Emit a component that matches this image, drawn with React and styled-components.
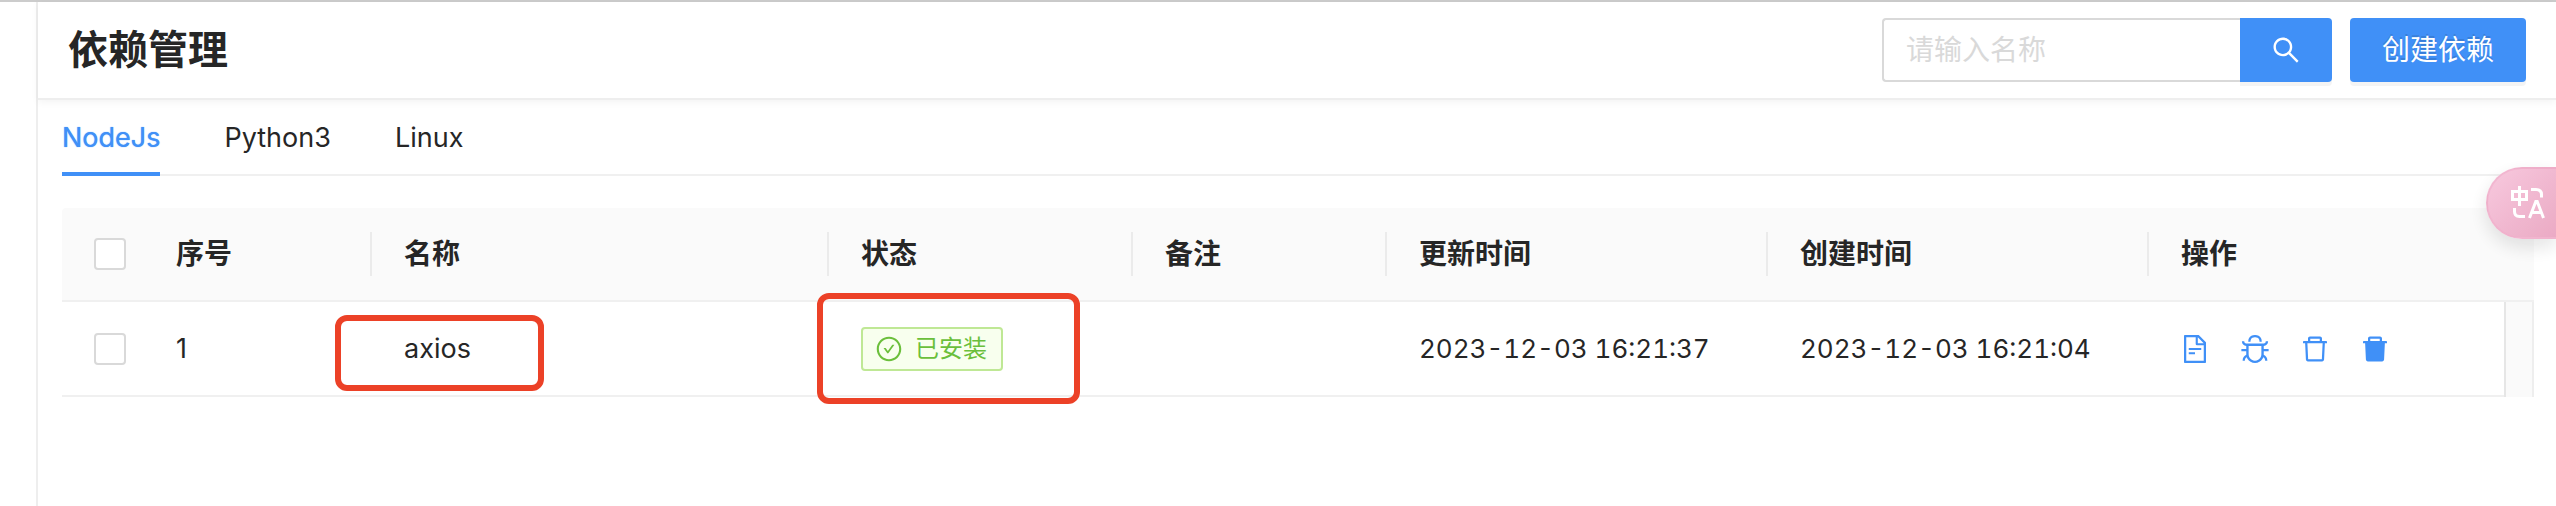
import React, { useState } from 'react';
import styled, { createGlobalStyle } from 'styled-components'
import {
  AiOutlineSearch,
  AiOutlineCheckCircle,
  AiOutlineFileText,
  AiOutlineBug,
  AiOutlineDelete,
  AiFillDelete,
} from 'react-icons/ai'

const tabs = ['NodeJs', 'Python3', 'Linux']

const columns = [
  { title: '序号', width: 228, split: true },
  { title: '名称', split: true },
  { title: '状态', width: 304, split: true },
  { title: '备注', width: 254, split: true },
  { title: '更新时间', width: 381, split: true },
  { title: '创建时间', width: 381, split: true },
  { title: '操作', width: 355 },
]

const dependencies = [
  {
    id: 1,
    name: 'axios',
    status: '已安装',
    remark: '',
    updatedAt: '2023-12-03 16:21:37',
    createdAt: '2023-12-03 16:21:04',
  },
]

function App() {

  const [search, setSearch] = useState('')
  const [activeTab, setActiveTab] = useState('NodeJs')
  const [selected, setSelected] = useState([])

  const toggle = (id) => {
    setSelected(selected.includes(id) ? selected.filter(s => s !== id) : selected.concat([id]))
  }

  const toggleAll = () => {
    setSelected(selected.length === dependencies.length ? [] : dependencies.map(d => d.id))
  }

  return (
    <Page>
      <GlobalStyle />
      <Main>
        <Header>
          <Title>依赖管理</Title>
          <Actions>
            <SearchBox onSubmit={e => e.preventDefault()}>
              <SearchInput
                aria-label="请输入名称"
                placeholder="请输入名称"
                value={search}
                onChange={e => setSearch(e.target.value)}
              />
              <SearchButton type="submit" aria-label="搜索"><AiOutlineSearch /></SearchButton>
            </SearchBox>
            <PrimaryButton type="button">创建依赖</PrimaryButton>
          </Actions>
        </Header>

        <Content>
          <Tabs role="tablist">
            {tabs.map(tab => (
              <Tab
                type="button"
                role="tab"
                key={tab}
                aria-selected={tab === activeTab}
                $active={tab === activeTab}
                onClick={() => setActiveTab(tab)}
              >
                {tab}
              </Tab>
            ))}
          </Tabs>

          <Table>
            <colgroup>
              <Col $width={82} />
              {columns.map(column => <Col $width={column.width} key={column.title} />)}
              <Col $width={30} />
            </colgroup>
            <thead>
              <tr>
                <HeadCell>
                  <Checkbox
                    type="checkbox"
                    aria-label="全选"
                    checked={selected.length === dependencies.length}
                    onChange={toggleAll}
                  />
                </HeadCell>
                {columns.map(column => (
                  <HeadCell key={column.title}>
                    <HeadLabel $split={column.split}>{column.title}</HeadLabel>
                  </HeadCell>
                ))}
                <HeadCell />
              </tr>
            </thead>
            <tbody>
              {dependencies.map(item => (
                <tr key={item.id}>
                  <Cell>
                    <Checkbox
                      type="checkbox"
                      aria-label={'选择 ' + item.name}
                      checked={selected.includes(item.id)}
                      onChange={() => toggle(item.id)}
                    />
                  </Cell>
                  <Cell>{item.id}</Cell>
                  <Cell>
                    {item.name}
                    <NameMark />
                  </Cell>
                  <Cell>
                    <Tag><AiOutlineCheckCircle />{item.status}</Tag>
                    <StatusMark />
                  </Cell>
                  <Cell>{item.remark}</Cell>
                  <TimeCell>{item.updatedAt}</TimeCell>
                  <TimeCell>{item.createdAt}</TimeCell>
                  <Cell>
                    <RowActions>
                      <IconLink href="#log" aria-label="日志"><AiOutlineFileText /></IconLink>
                      <IconLink href="#reinstall" aria-label="重新安装"><AiOutlineBug /></IconLink>
                      <IconLink href="#delete" aria-label="删除"><AiOutlineDelete /></IconLink>
                      <IconLink href="#force-delete" aria-label="强制删除"><AiFillDelete /></IconLink>
                    </RowActions>
                  </Cell>
                  <ScrollCell />
                </tr>
              ))}
            </tbody>
          </Table>
        </Content>
      </Main>

      <TranslateButton type="button" aria-label="翻译">
        <svg width="35" height="34" viewBox="0 0 35 34" fill="none" stroke="#fff" strokeWidth="3">
          <path d="M1.5 5.5h14v8h-14zM8.5 0v20" />
          <path d="M20 3.5h5q5.5 0 5.5 5v3" />
          <path d="M3.5 22v3.500q0 5 5 5h5.500" />
          <path d="M18.500 32l6.300-16.500h1.400l6.300 16.500M21 26.500h9" />
        </svg>
      </TranslateButton>
    </Page>
  );
}


const GlobalStyle = createGlobalStyle`
  * {
    box-sizing: border-box;
  }

  body {
    margin: 0;
    background-color: white;
    color: #262626;
    font-family: Inter, "Noto Sans CJK SC", sans-serif;
    font-size: 28px;
    line-height: 44px;
  }

  button, input {
    font: inherit;
  }
`

const Page = styled.div`
  min-height: 100vh;
  display: flex;
  border-top: 2px solid #cccccc;
  padding-left: 36px;
`

const Main = styled.main`
  flex: 1;
  min-width: 0;
  border-left: 2px solid #eeeeee;
`

const Header = styled.header`
  display: flex;
  align-items: center;
  justify-content: space-between;
  padding: 16px 30px;
  border-bottom: 2px solid #eeeeee;
  box-shadow: 0 2px 8px rgba(0, 0, 0, 0.05);
`

const Title = styled.h1`
  margin: 0;
  font-size: 40px;
  line-height: 64px;
  font-weight: 700;
`

const Actions = styled.div`
  display: flex;
  gap: 18px;
`

const SearchBox = styled.form`
  display: flex;
`

const SearchInput = styled.input`
  width: 358px;
  height: 64px;
  padding: 0 22px;
  border: 2px solid #d9d9d9;
  border-right: none;
  border-radius: 4px 0 0 4px;
  outline: none;
  color: #262626;

  &::placeholder {
    color: #d9d9d9;
    opacity: 1;
  }
`

const PrimaryButton = styled.button`
  height: 64px;
  padding: 0 32px;
  border: none;
  border-radius: 4px;
  background-color: #4090f7;
  color: white;
  text-shadow: 0 -2px 0 rgba(0, 0, 0, 0.12);
  box-shadow: 0 4px 0 rgba(0, 0, 0, 0.045);
  cursor: pointer;
`

const SearchButton = styled(PrimaryButton)`
  display: flex;
  align-items: center;
  padding: 0 30px;
  border-radius: 0 4px 4px 0;
  font-size: 32px;
`

const Content = styled.div`
  padding: 0 22px 0 24px;
`

const Tabs = styled.div`
  display: flex;
  gap: 64px;
  margin-bottom: 32px;
  box-shadow: inset 0 -2px 0 #f0f0f0;
`

const Tab = styled.button`
  padding: 16px 0 12px;
  border: none;
  border-bottom: 4px solid ${props => props.$active ? '#4090f7' : 'transparent'};
  background: none;
  color: ${props => props.$active ? '#4090f7' : '#262626'};
  font-size: 27px;
  text-shadow: ${props => props.$active ? '0 0 1px currentcolor' : 'none'};
  cursor: pointer;
`

const Table = styled.table`
  width: 100%;
  table-layout: fixed;
  border-spacing: 0;
`

const Col = styled.col`
  width: ${props => props.$width ? props.$width + 'px' : 'auto'};
`

const HeadCell = styled.th`
  height: 94px;
  padding: 0;
  background-color: #fafafa;
  border-bottom: 2px solid #f0f0f0;
  text-align: left;
  font-weight: 600;

  &:first-child {
    padding-left: 32px;
    border-top-left-radius: 4px;
  }
`

const HeadLabel = styled.div`
  padding-left: 32px;
  border-right: ${props => props.$split ? '2px solid #ebebeb' : 'none'};
`

const Cell = styled.td`
  position: relative;
  height: 95px;
  padding: 0 0 0 32px;
  border-bottom: 2px solid #f0f0f0;
  font-size: 27px;
`

const TimeCell = styled(Cell)`
  font-size: 26px;
  font-variant-numeric: tabular-nums;
`

const ScrollCell = styled.td`
  background-color: #fafafa;
  border-left: 2px solid #e6e6e6;
  border-right: 2px solid #eeeeee;
`

const Checkbox = styled.input`
  appearance: none;
  display: block;
  width: 32px;
  height: 32px;
  margin: 0;
  border: 2px solid #d9d9d9;
  border-radius: 4px;
  background-color: white;

  &:checked {
    background-color: #4090f7;
    border-color: #4090f7;
  }
`

const Tag = styled.span`
  display: flex;
  align-items: center;
  gap: 12px;
  width: fit-content;
  padding: 0 14px 0 12px;
  border: 2px solid #bfe895;
  border-radius: 4px;
  background-color: #f8ffee;
  color: #6bbf3b;
  font-size: 24px;
  line-height: 40px;

  svg {
    font-size: 28px;
  }
`

const RowActions = styled.div`
  display: flex;
  gap: 28px;
  margin-left: -2px;
`

const IconLink = styled.a`
  display: flex;
  color: #4090f7;
  font-size: 32px;
`

// red frames drawn over the row
const Mark = styled.div`
  position: absolute;
  border: 6px solid #ec4127;
  border-radius: 12px;
  pointer-events: none;
`

const NameMark = styled(Mark)`
  top: 13px;
  left: -37px;
  width: 209px;
  height: 76px;
`

const StatusMark = styled(Mark)`
  top: -9px;
  left: -12px;
  width: 263px;
  height: 111px;
`

const TranslateButton = styled.button`
  position: fixed;
  top: 167px;
  right: 0;
  width: 70px;
  height: 72px;
  display: flex;
  align-items: center;
  padding: 0 0 0 23px;
  border: 2px solid rgba(240, 170, 200, 0.6);
  border-right: none;
  border-radius: 36px 0 0 36px;
  background: linear-gradient(135deg, #f8c6dc, #eaa6c2);
  box-shadow: 0 8px 20px rgba(0, 0, 0, 0.12);
  opacity: 0.95;
  cursor: pointer;
`


export default App;
